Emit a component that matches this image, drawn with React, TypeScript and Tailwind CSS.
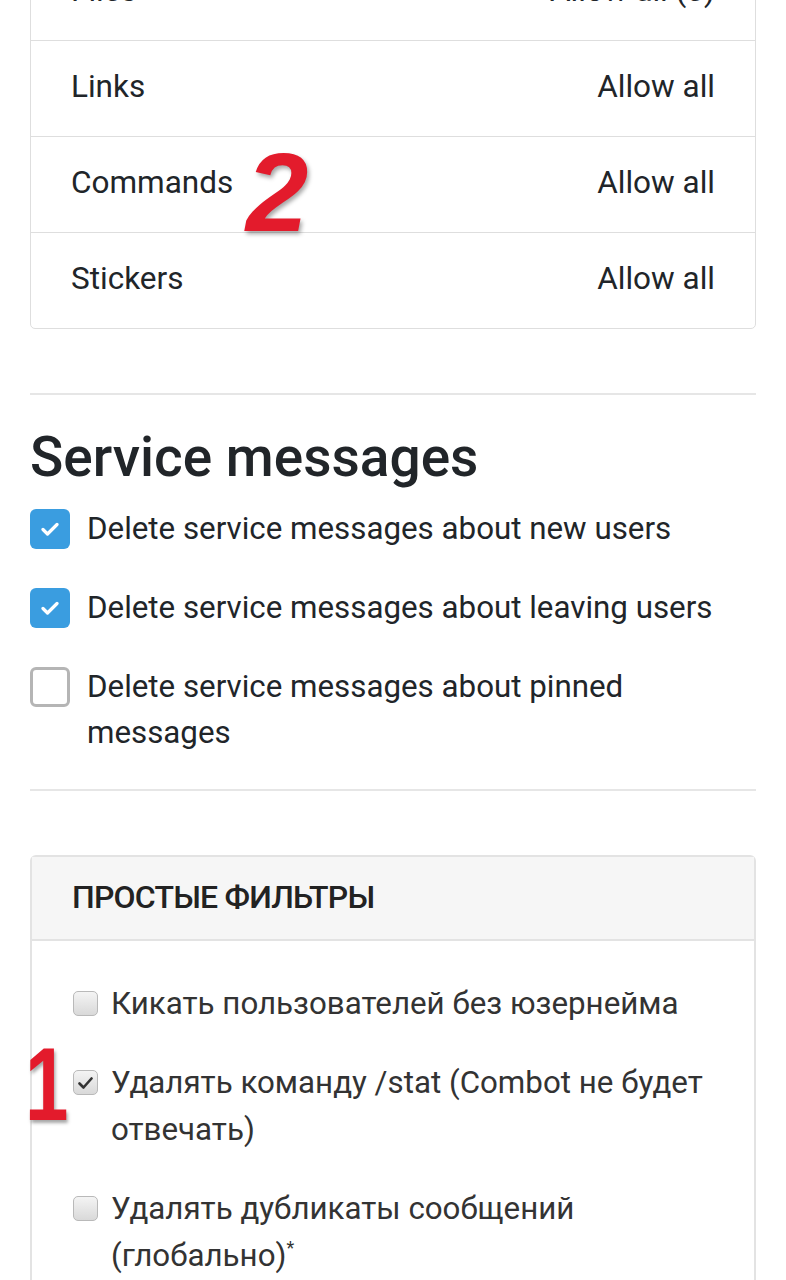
import React from "react";

const permRows = [
  { name: "Files", value: "Allow all (0)" },
  { name: "Links", value: "Allow all" },
  { name: "Commands", value: "Allow all" },
  { name: "Stickers", value: "Allow all" },
];

const serviceItems = [
  { label: "Delete service messages about new users", checked: true },
  { label: "Delete service messages about leaving users", checked: true },
  { label: "Delete service messages about pinned messages", checked: false },
];

const filterItems: { label: React.ReactNode; checked: boolean }[] = [
  { label: "Кикать пользователей без юзернейма", checked: false },
  { label: "Удалять команду /stat (Combot не будет отвечать)", checked: true },
  {
    label: (
      <>
        Удалять дубликаты сообщений (глобально)<span className="relative -top-[12px] text-[18px] leading-none">*</span>
      </>
    ),
    checked: false,
  },
];

const BlueCheck = ({ checked }: { checked: boolean }) =>
  checked ? (
    <span className="mt-[3px] flex h-[40px] w-[40px] shrink-0 items-center justify-center rounded-[6px] bg-[#3a9de0]">
      <svg width="18" height="14" viewBox="0 0 18 14" fill="none">
        <path d="M2 7.5l4.5 4.5L16 2.5" stroke="white" strokeWidth="3.2" strokeLinecap="round" strokeLinejoin="round" />
      </svg>
    </span>
  ) : (
    <span className="mt-[3px] h-[40px] w-[40px] shrink-0 rounded-[6px] border-[3px] border-[#b5b5b5] bg-white" />
  );

const SmallCheck = ({ checked }: { checked: boolean }) => (
  <span className="mt-[11px] flex h-[25px] w-[25px] shrink-0 items-center justify-center rounded-[5px] border border-[#b9b9b9] bg-gradient-to-b from-[#f4f4f4] to-[#d9d9d9]">
    {checked && (
      <svg width="15" height="12" viewBox="0 0 15 12" fill="none">
        <path d="M1.5 6.5l4 4L13.5 1.5" stroke="#333" strokeWidth="2.6" strokeLinecap="round" strokeLinejoin="round" />
      </svg>
    )}
  </span>
);

export default function App() {
  return (
    <div className="relative h-[1280px] w-[786px] overflow-hidden bg-white px-[30px] font-['Roboto',sans-serif] text-[#212529]">
      {/* permissions card, scrolled so the first row is cut off */}
      <div className="-mt-[57px] rounded-b-[5px] border border-[#dedede]">
        {permRows.map((r, i) => (
          <div
            key={r.name}
            className={`flex h-[96px] items-center justify-between px-[40px] pb-[3px] text-[31.5px] ${i > 0 ? "border-t border-[#dedede]" : ""}`}
          >
            <span>{r.name}</span>
            <span>{r.value}</span>
          </div>
        ))}
      </div>

      <hr className="mt-[64px] border-t-2 border-[#e6e6e6]" />

      <h2 className="mt-[33px] text-[55px] leading-[58px] font-medium">Service messages</h2>

      <div className="mt-[20px] flex flex-col gap-[33px]">
        {serviceItems.map((s) => (
          <div key={s.label} className="flex gap-[17px] text-[31.3px] leading-[46px]">
            <BlueCheck checked={s.checked} />
            <span>{s.label}</span>
          </div>
        ))}
      </div>

      <hr className="mt-[33px] border-t-2 border-[#e6e6e6]" />

      <div className="mt-[64px] rounded-[6px] border-2 border-[#e3e3e3]">
        <div className="flex h-[84px] items-center border-b-2 border-[#e3e3e3] bg-[#f6f6f6] px-[40px] pb-[2px] text-[32px] font-medium tracking-[-0.8px] text-[#222]">
          ПРОСТЫЕ ФИЛЬТРЫ
        </div>
        <div className="flex flex-col gap-[32px] px-[41px] pt-[39px] pb-[40px]">
          {filterItems.map((f, i) => (
            <div key={i} className="flex gap-[13px] text-[31.3px] leading-[47px] text-[#333]">
              <SmallCheck checked={f.checked} />
              <span>{f.label}</span>
            </div>
          ))}
        </div>
      </div>

      {/* red annotations */}
      <span className="pointer-events-none absolute left-[246px] top-[137px] font-['Liberation_Sans',sans-serif] text-[112px] leading-none font-bold italic text-[#e31b2c] [text-shadow:2px_3px_4px_rgba(0,0,0,0.35)]">
        2
      </span>
      <span className="pointer-events-none absolute left-[25px] top-[1032px] origin-left scale-x-[0.75] font-['Liberation_Sans',sans-serif] text-[104px] leading-none font-bold text-[#e31b2c] [text-shadow:2px_3px_4px_rgba(0,0,0,0.35)]">
        1
      </span>
    </div>
  );
}
